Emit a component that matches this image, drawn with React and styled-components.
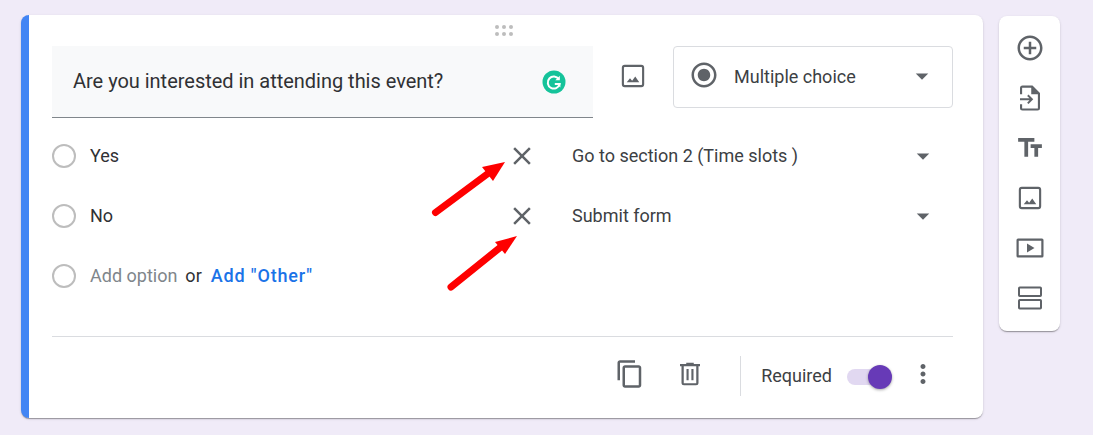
import React from "react";
import styled, { createGlobalStyle } from "styled-components";
import {
  MdAddCircleOutline,
  MdArrowDropDown,
  MdClose,
  MdContentCopy,
  MdMoreVert,
  MdRadioButtonChecked,
  MdTextFields,
} from "react-icons/md";

const GlobalStyle = createGlobalStyle`
  html, body {
    margin: 0;
    height: 100%;
    overflow: hidden;
    background: #f0ebf8;
    font-family: Roboto, "Liberation Sans", sans-serif;
  }
`;

const Page = styled.div`
  position: relative;
  display: flex;
  align-items: flex-start;
  gap: 16px;
  padding: 15px 0 0 21px;
  height: 435px;
  box-sizing: border-box;
`;

const Card = styled.div`
  width: 962px;
  height: 403px;
  box-sizing: border-box;
  padding: 0 30px 0 23px;
  background: #fff;
  border-left: 8px solid #4285f4;
  border-radius: 8px;
  box-shadow: 0 2px 1px -1px rgba(0, 0, 0, 0.2), 0 1px 1px 0 rgba(0, 0, 0, 0.14),
    0 1px 3px 0 rgba(0, 0, 0, 0.12);
`;

const DragRow = styled.div`
  height: 31px;
  display: flex;
  justify-content: center;
  align-items: center;
  margin-left: 2px;
`;

const DragDots = styled.div`
  display: grid;
  grid-template-columns: repeat(3, 4px);
  gap: 3px 3px;
  span {
    width: 4px;
    height: 4px;
    border-radius: 50%;
    background: #bdbdbd;
  }
`;

const Header = styled.div`
  display: flex;
  align-items: flex-start;
`;

const QuestionField = styled.div`
  width: 541px;
  height: 72px;
  box-sizing: border-box;
  display: flex;
  align-items: center;
  justify-content: space-between;
  padding: 0 27px 0 21px;
  background: #f8f9fa;
  border-bottom: 1px solid #80868b;
  color: #303134;
  font-size: 20px;
`;

const QuestionText = styled.span`
  margin-top: -1px;
  letter-spacing: -0.02px;
`;

const ImageSlot = styled.div`
  width: 80px;
  height: 59px;
  display: flex;
  align-items: center;
  justify-content: center;
  color: #5f6368;
`;

const TypeSelect = styled.div`
  width: 280px;
  height: 62px;
  box-sizing: border-box;
  display: flex;
  align-items: center;
  padding: 0 15px;
  border: 1px solid #dadce0;
  border-radius: 4px;
  color: #3c4043;
  font-size: 18px;
  svg {
    color: #5f6368;
    margin-top: -2px;
  }
  svg:first-child {
    margin-top: -4px;
  }
`;

const TypeLabel = styled.span`
  flex: 1;
  margin: -2px 0 0 15px;
`;

const Options = styled.div`
  margin-top: 8px;
`;

const OptionRow = styled.div`
  display: grid;
  grid-template-columns: 38px 408px 48px 1fr;
  align-items: center;
  height: 60px;
  font-size: 18px;
  color: #303134;
`;

const Radio = styled.span`
  width: 24px;
  height: 24px;
  box-sizing: border-box;
  border: 2px solid #bdbdbd;
  border-radius: 50%;
`;

const Label = styled.span`
  margin-top: -2px;
`;

const CloseSlot = styled.div`
  display: flex;
  justify-content: center;
  color: #5f6368;
`;

const Target = styled.div`
  display: flex;
  align-items: center;
  justify-content: space-between;
  padding: 0 15px 0 26px;
  color: #3c4043;
  svg {
    color: #5f6368;
  }
`;

const AddLine = styled.div`
  display: flex;
  align-items: center;
  grid-column: 2 / 5;
  margin-top: -2px;
`;

const AddOption = styled.span`
  color: #80868b;
`;

const Or = styled.span`
  margin-left: 8px;
  color: #303134;
`;

const AddOther = styled.span`
  margin-left: 9px;
  color: #1a73e8;
  font-weight: 500;
  letter-spacing: 0.85px;
`;

const Divider = styled.div`
  margin-top: 30px;
  height: 1px;
  background: #dadce0;
`;

const Footer = styled.div`
  display: flex;
  align-items: center;
  justify-content: flex-end;
  height: 78px;
  padding-right: 15px;
`;

const FooterIcon = styled.div`
  width: 48px;
  display: flex;
  justify-content: center;
  margin-right: ${(p) => p.$gap || 0}px;
  margin-top: -5px;
  color: #5f6368;
`;

const VerticalRule = styled.div`
  width: 1px;
  height: 40px;
  background: #dadce0;
  margin: 0 20px 0 0;
`;

const RequiredLabel = styled.span`
  margin-top: -2px;
  font-size: 18px;
  color: #3c4043;
`;

const Switch = styled.div`
  position: relative;
  width: 38px;
  height: 16px;
  margin: 1px 23px 0 15px;
  border-radius: 8px;
  background: #e1d8f1;
`;

const Thumb = styled.span`
  position: absolute;
  right: -7px;
  top: -4px;
  width: 24px;
  height: 24px;
  border-radius: 50%;
  background: #673ab7;
  box-shadow: 0 1px 3px rgba(0, 0, 0, 0.35);
`;

const MoreSlot = styled.div`
  display: flex;
  margin-top: -5px;
  color: #5f6368;
`;

const Toolbar = styled.div`
  width: 61px;
  height: 315px;
  margin-top: 1px;
  box-sizing: border-box;
  padding: 7px 0 8px;
  display: flex;
  flex-direction: column;
  background: #fff;
  border-radius: 8px;
  box-shadow: 0 2px 1px -1px rgba(0, 0, 0, 0.2), 0 1px 1px 0 rgba(0, 0, 0, 0.14),
    0 1px 3px 0 rgba(0, 0, 0, 0.12);
`;

const ToolButton = styled.div`
  height: 50px;
  display: flex;
  align-items: center;
  justify-content: center;
  color: #5f6368;
`;

const ArrowLayer = styled.svg`
  position: absolute;
  left: 0;
  top: 0;
  pointer-events: none;
`;

const PictureIcon = () => (
  <svg width="30" height="30" viewBox="0 0 24 24">
    <rect x="3.900" y="3.900" width="16.200" height="16.200" rx="1.500" fill="none" stroke="currentColor" strokeWidth="1.700" />
    <path d="M7 17l2.600-3.300 1.700 2 2.500-3.300 3.200 4.600z" fill="currentColor" />
  </svg>
);

const ImportIcon = () => (
  <svg width="30" height="30" viewBox="0 0 24 24" fill="currentColor">
    <path d="M6 2h8l6 6v12a2 2 0 0 1-2 2H6a2 2 0 0 1-2-2v-3h1.700v3.300h12.600V9H13V3.700H5.700V9H4V4a2 2 0 0 1 2-2z" />
    <path d="M4 12.200h7.600L9.700 10.300 10.800 9.200l3.800 3.800-3.800 3.800-1.100-1.100 1.900-1.900H4z" />
  </svg>
);

const VideoIcon = () => (
  <svg width="28" height="24" viewBox="0 0 28 24" fill="currentColor">
    <path d="M2 2.500h24A1.500 1.500 0 0 1 27.500 4v16a1.500 1.500 0 0 1-1.500 1.500H2A1.500 1.500 0 0 1 .5 20V4A1.500 1.500 0 0 1 2 2.500zM2.700 4.700v14.600h22.600V4.700z" />
    <path d="M11 7.500v9l7.500-4.500z" />
  </svg>
);

const SectionIcon = () => (
  <svg width="24" height="24" viewBox="0 0 24 24" fill="none" stroke="currentColor" strokeWidth="2">
    <rect x="1" y="1.500" width="22" height="8.500" rx="0.800" />
    <rect x="1" y="14" width="22" height="8.500" rx="0.800" />
  </svg>
);

const TrashIcon = () => (
  <svg width="30" height="30" viewBox="0 0 24 24" fill="currentColor">
    <path d="M9 3v1H4v1.700h1.200V19a2 2 0 0 0 2 2h9.600a2 2 0 0 0 2-2V5.700H20V4h-5V3zM7 5.700h10v13.600H7z" />
    <path d="M9.200 8h1.700v9H9.200zM13.100 8h1.700v9h-1.700z" />
  </svg>
);

const GrammarlyBadge = () => (
  <svg width="24" height="24" viewBox="0 0 24 24">
    <circle cx="12" cy="12" r="11.500" fill="#15c39a" />
    <path d="M16.800 9.300A6 6 0 1 0 17.600 14H12.800" fill="none" stroke="#fff" strokeWidth="2" />
    <path d="M17.800 5.800v4.500h-4.500z" fill="#fff" />
    <path d="M14 13.200h4.400v4.400z" fill="#fff" />
  </svg>
);

const RedArrow = ({ x1, y1, x2, y2, bx, by, cx, cy, tip }) => (
  <>
    <line x1={x1} y1={y1} x2={x2} y2={y2} stroke="#fe0000" strokeWidth="7" strokeLinecap="round" />
    <polygon points={`${tip[0]},${tip[1]} ${bx},${by} ${cx},${cy}`} fill="#fe0000" />
  </>
);

export default function App() {
  return (
    <>
      <GlobalStyle />
      <Page>
        <Card>
          <DragRow>
            <DragDots>
              {[0, 1, 2, 3, 4, 5].map((d) => (
                <span key={d} />
              ))}
            </DragDots>
          </DragRow>
          <Header>
            <QuestionField>
              <QuestionText>Are you interested in attending this event?</QuestionText>
              <GrammarlyBadge />
            </QuestionField>
            <ImageSlot>
              <PictureIcon />
            </ImageSlot>
            <TypeSelect>
              <MdRadioButtonChecked size={30} />
              <TypeLabel>Multiple choice</TypeLabel>
              <MdArrowDropDown size={30} />
            </TypeSelect>
          </Header>
          <Options>
            <OptionRow>
              <Radio />
              <Label>Yes</Label>
              <CloseSlot>
                <MdClose size={30} />
              </CloseSlot>
              <Target>
                <Label>Go to section 2 (Time slots )</Label>
                <MdArrowDropDown size={30} />
              </Target>
            </OptionRow>
            <OptionRow>
              <Radio />
              <Label>No</Label>
              <CloseSlot>
                <MdClose size={30} />
              </CloseSlot>
              <Target>
                <Label>Submit form</Label>
                <MdArrowDropDown size={30} />
              </Target>
            </OptionRow>
            <OptionRow>
              <Radio />
              <AddLine>
                <AddOption>Add option</AddOption>
                <Or>or</Or>
                <AddOther>Add "Other"</AddOther>
              </AddLine>
            </OptionRow>
          </Options>
          <Divider />
          <Footer>
            <FooterIcon $gap={12}>
              <MdContentCopy size={30} />
            </FooterIcon>
            <FooterIcon $gap={26}>
              <TrashIcon />
            </FooterIcon>
            <VerticalRule />
            <RequiredLabel>Required</RequiredLabel>
            <Switch>
              <Thumb />
            </Switch>
            <MoreSlot>
              <MdMoreVert size={30} />
            </MoreSlot>
          </Footer>
        </Card>
        <Toolbar>
          <ToolButton>
            <MdAddCircleOutline size={30} />
          </ToolButton>
          <ToolButton>
            <ImportIcon />
          </ToolButton>
          <ToolButton>
            <MdTextFields size={30} />
          </ToolButton>
          <ToolButton>
            <PictureIcon />
          </ToolButton>
          <ToolButton>
            <VideoIcon />
          </ToolButton>
          <ToolButton>
            <SectionIcon />
          </ToolButton>
        </Toolbar>
        <ArrowLayer width="1093" height="435">
          <RedArrow x1={435.500} y1={212.500} x2={490} y2={172} tip={[505, 162]} bx={482} by={167} cx={493} cy={181} />
          <RedArrow x1={451} y1={287} x2={502} y2={246} tip={[517, 236]} bx={495} by={242} cx={505} cy={254} />
        </ArrowLayer>
      </Page>
    </>
  );
}
